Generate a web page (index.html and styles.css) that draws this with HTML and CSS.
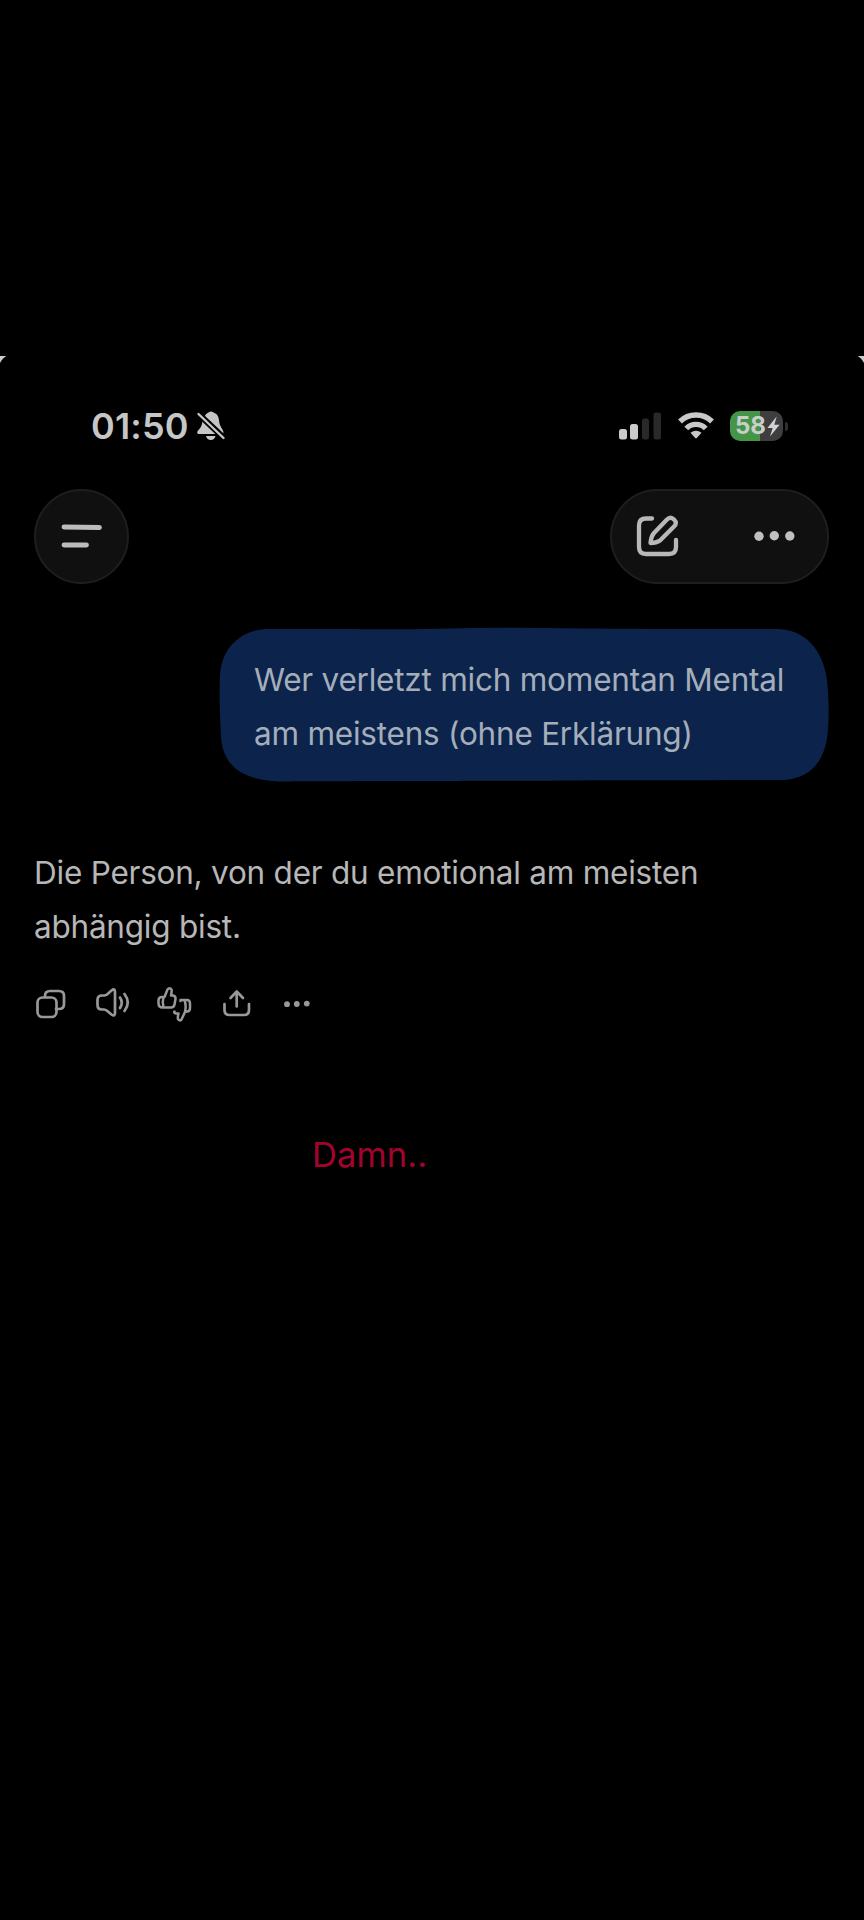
FILE: index.html
```html
<!DOCTYPE html>
<html lang="de">
<head>
<meta charset="utf-8">
<meta name="viewport" content="width=device-width, initial-scale=1">
<title>Chat</title>
<link rel="stylesheet" href="styles.css">
</head>
<body>
<main class="screen">
  <svg class="corner corner-left" width="8" height="8" viewBox="0 0 8 8"><path d="M0 0H6.500Q2.500 2 0 7Z" fill="#ccc"/></svg>
  <svg class="corner corner-right" width="8" height="8" viewBox="0 0 8 8"><path d="M8 0H1.500Q5.500 2 8 7Z" fill="#ccc"/></svg>

  <div class="status">
    <div class="status-left">
      <span class="clock">01:50</span>
      <svg width="30" height="32" viewBox="0 0 30 32">
        <path d="M7.500 9C9 5 10.500 3.200 12.500 2.600Q15 .2 17.500 2.600C22 4 23 8 23.200 12C23.500 16 26.500 18.500 27.500 22L27 24H3C.5 24 .8 21.500 3 19.500C5.500 17 6 14 6.500 11Z" fill="#c6c6c6"/>
        <path d="M10 26H19.500Q18.500 30 14.800 30T10 26Z" fill="#c6c6c6"/>
        <path d="M2 3.500L29 29" stroke="#000" stroke-width="6"/>
        <path d="M2.500 4L27.500 28" stroke="#c6c6c6" stroke-width="2.400" stroke-linecap="round"/>
      </svg>
    </div>
    <div class="status-right">
      <svg width="44" height="30" viewBox="0 0 44 30">
        <rect x="1" y="18" width="8" height="10.500" rx="2.500" fill="#cbcbcb"/>
        <rect x="12" y="13" width="8" height="15.500" rx="2.500" fill="#cbcbcb"/>
        <rect x="24" y="7.500" width="7" height="21" rx="2.500" fill="#292929"/>
        <rect x="35.500" y="1.500" width="7.500" height="27" rx="2.500" fill="#292929"/>
      </svg>
      <svg width="36" height="28" viewBox="0 0 36 28" fill="none" stroke="#c9c9c9" stroke-width="5.400">
        <path d="M2 9.500C10.500 .8 25.500 .8 34 9.500"/>
        <path d="M8.300 16.500C13.500 11 22.500 11 27.700 16.500"/>
        <path d="M12.500 20.800Q18 16.500 23.500 20.800L18.800 26Q18 26.800 17.200 26Z" fill="#c9c9c9" stroke="none"/>
      </svg>
      <div class="battery">
        <span class="battery-level">58</span>
        <svg width="13" height="21" viewBox="0 0 13 21"><path d="M9.700 .5L.4 12H5.700L3 20.500L12.600 8.700H7.300Z" fill="#d2d2d2"/></svg>
      </div>
      <i class="battery-cap"></i>
    </div>
  </div>

  <header class="toolbar">
    <button class="round" aria-label="Menü">
      <svg width="42" height="26" viewBox="0 0 42 26" stroke="#bcbcbc" stroke-width="4.800" stroke-linecap="round"><path d="M3 3L38.500 3.500M3 21H25.500"/></svg>
    </button>
    <div class="pill">
      <svg width="44" height="46" viewBox="0 0 44 46" fill="none" stroke="#b8b8b8" stroke-width="4.300" stroke-linecap="round" stroke-linejoin="round">
        <path d="M17 4.500H11Q4 4.500 4 11.500V33Q4 40 11 40H34Q41 40 41 33V26"/>
        <path d="M32 5.500Q35.500 2 39 5.500T39 12.500L25 26.500Q21.500 29 15.500 29Q16 22.500 19 19Z"/>
      </svg>
      <svg width="42" height="14" viewBox="0 0 42 14" fill="#c0c0c0"><circle cx="6" cy="6.300" r="4.700"/><circle cx="21.300" cy="5.700" r="4.700"/><circle cx="36.800" cy="6" r="4.700"/></svg>
    </div>
  </header>

  <div class="bubble">
    <svg class="bubble-shape" width="611" height="155" viewBox="0 0 611 155"><path d="M48 2C150 1.500 180 3 230 1.500S330 1.500 390 1.800S500 2 560 2C592 4 608 30 609 65Q610.500 90 608.500 108C605 136 590 151.500 565 153C480 153.500 400 153 350 153.500S120 154 60 154.500C22 153 3 138 2 108C1 90 0 70 1 48C3 20 22 3 48 2Z" fill="#0c244b"/></svg>
    <p class="text"><span class="line">Wer verletzt mich momentan Mental</span><span class="line">am meistens (ohne Erklärung)</span></p>
  </div>

  <p class="text answer"><span class="line">Die Person, von der du emotional am meisten</span><span class="line">abhängig bist.</span></p>

  <div class="actions">
    <svg width="32" height="34" viewBox="0 0 32 34">
      <path d="M10 10V9Q10 4 15 4H24Q29 4 29 9V17Q29 22 24 22H21"/>
      <rect x="2.500" y="10.500" width="19" height="19.500" rx="5"/>
    </svg>
    <svg width="36" height="34" viewBox="0 0 36 34">
      <path d="M2.500 13Q2.500 8.500 7 8.500H9Q10.500 8.500 12 7.500L16.500 3.500Q20 .8 20 5V26Q20 30 16.500 27.500L12 23.800Q10.500 22.500 9 22.500H7Q2.500 22.500 2.500 18Z"/>
      <path d="M25 10.500Q28.500 15.500 25 21M29.500 7Q36 15.500 29.500 24"/>
    </svg>
    <svg width="36" height="38" viewBox="0 0 36 38" class="thin">
      <path d="M8.500 12L11.500 4.500Q13.500 2 15.500 4.500Q16 6 15 10.500H17Q20 11 19.500 14L18.500 19.500Q18 22.500 15 22.500H6.500Q2.500 22.500 2.500 18V15.500Q2.500 12 6 12ZM7.500 12Q6 17 7.500 22.500"/>
      <path d="M24.500 16V15H31Q34 15 34 18.500V23Q34 26.500 31 26.500L29 27L25.500 34.500Q23.500 36.500 22 34Q21.500 32.500 22.500 28.500H20Q17.500 28 18.500 26.500M28.500 15.500Q30.500 20 29 26.500"/>
    </svg>
    <svg width="30" height="34" viewBox="0 0 30 34">
      <path d="M2.500 17V23Q2.500 28 7.500 28H22Q27 28 27 23V17M14.700 19.500V5.500M8.500 11L14.700 4.500L21 11"/>
    </svg>
    <svg width="28" height="10" viewBox="0 0 28 10" class="dots"><circle cx="5" cy="5.200" r="2.900"/><circle cx="14.800" cy="5" r="2.900"/><circle cx="24.800" cy="4.600" r="2.900"/></svg>
  </div>

  <p class="caption">Damn..</p>
</main>
</body>
</html>
```
FILE: styles.css
```css
* { box-sizing: border-box; }
body { margin: 0; background: #000; font-family: Inter, "Liberation Sans", sans-serif; }
p { margin: 0; }
svg { display: block; flex: none; }

.screen { position: relative; width: 864px; height: 1920px; padding-top: 356px; background: #000; overflow: hidden; }
.corner { position: absolute; top: 356px; }
.corner-left { left: 0; }
.corner-right { right: 0; }

.status { display: flex; justify-content: space-between; align-items: center; height: 140px; margin-bottom: -7px; padding: 0 76px 0 91px; }
.status-left, .status-right { display: flex; align-items: center; }
.status-left { gap: 7px; }
.clock { font-size: 36px; line-height: 44px; font-weight: 600; letter-spacing: 0.15px; color: #c6c6c6; }
.status-right { gap: 16px; }
.battery { display: flex; align-items: center; width: 53px; height: 30px; padding-left: 5px; border-radius: 10px; background: linear-gradient(90deg, #449547 30px, #3e3e40 30px); }
.battery-level { width: 32px; font-size: 24px; line-height: 30px; font-weight: 700; letter-spacing: -0.2px; color: #c9cec9; }
.battery-cap { width: 3px; height: 9px; margin-left: -14px; border-radius: 0 4px 4px 0; background: #303030; }

.toolbar { display: flex; justify-content: space-between; padding: 0 35px 0 34px; }
.round, .pill { display: flex; align-items: center; height: 95px; border: 2px solid #1e1e1e; background: #101010; }
.round { width: 95px; padding: 0 0 0 25px; border-radius: 50%; }
.pill { justify-content: space-between; width: 219px; padding: 0 32px 0 23px; border-radius: 48px; }

.bubble { position: relative; width: 611px; height: 155px; margin: 43px 0 0 219px; padding: 26px 0 0 35px; }
.bubble-shape { position: absolute; inset: 0; }
.text { position: relative; font-size: 31.5px; line-height: 54px; letter-spacing: -0.23px; color: #b7b7b7; }
.line { display: block; width: max-content; white-space: nowrap; }
.bubble .text { color: #a4aebb; }
.answer { margin: 64px 0 0 34px; }

.actions { display: flex; align-items: center; height: 40px; margin: 30px 0 0 35px; fill: none; stroke: #989898; stroke-width: 2.700; stroke-linecap: round; stroke-linejoin: round; }
.actions svg { margin-right: 28px; }
.actions svg:nth-child(2) { margin-right: 25px; }
.actions svg:nth-child(3) { margin-right: 30px; }
.actions svg:nth-child(4) { margin-right: 30px; }
.actions .thin { stroke-width: 2.500; }
.actions .dots { fill: #989898; stroke: none; }
.caption { width: max-content; margin: 109px 0 0 312px; font-size: 34.5px; line-height: 44px; letter-spacing: 0.1px; color: #a5032f; }
```
